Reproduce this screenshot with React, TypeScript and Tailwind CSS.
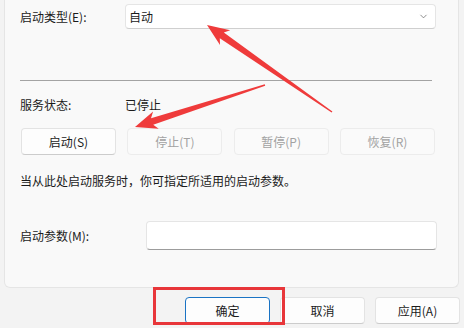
import { ChevronDown } from "lucide-react";

const font = { fontFamily: '"Noto Sans CJK SC", "Noto Sans", sans-serif' };

const serviceButtons = [
  { label: "启动(S)", enabled: true },
  { label: "停止(T)", enabled: false },
  { label: "暂停(P)", enabled: false },
  { label: "恢复(R)", enabled: false },
];

function Arrows() {
  return (
    <svg className="absolute inset-0 pointer-events-none" width="464" height="328" viewBox="0 0 464 328">
      {/* arrow to the startup type box */}
      <polygon
        fill="#ef3b3b"
        points="207,25 230.2,30.2 223.8,32.4 332.4,111.4 331.6,112.6 219.8,38.2 220,45"
      />
      {/* arrow to the start button */}
      <polygon
        fill="#ef3b3b"
        points="135,127 153.1,111.6 151,118.2 264.8,84.3 265.2,85.7 153.2,124.8 158.7,128.8"
      />
    </svg>
  );
}

export default function App() {
  return (
    <div className="relative w-[464px] h-[328px] bg-[#f3f3f3] overflow-hidden text-[12px] text-[#1b1b1b]" style={font}>
      {/* Panel */}
      <div className="ml-[4px] w-[455px] h-[288px] bg-[#f9f9f9] border-x border-b border-[#e5e5e5] rounded-b-[6px] pl-[15px] flex flex-col">
        {/* Startup type */}
        <div className="flex items-center mt-[4px] h-[25px]">
          <span className="w-[105px] leading-4">启动类型(E):</span>
          <div className="w-[311px] h-[25px] bg-white border border-[#e5e5e5] border-b-[#cfcfcf] rounded-[4px] flex items-center justify-between pl-[3px] pr-[6px]">
            <span className="leading-4">自动</span>
            <ChevronDown className="w-[11px] h-[11px] text-[#5c5c5c]" strokeWidth={1.5} />
          </div>
        </div>

        <div className="mt-[51px] w-[412px] h-px bg-[#a3a3a3]" />

        {/* Service status */}
        <div className="flex items-center mt-[16px] h-4">
          <span className="w-[105px] leading-4">服务状态:</span>
          <span className="leading-4">已停止</span>
        </div>

        <div className="mt-[15px] ml-px w-[414px] flex justify-between">
          {serviceButtons.map((b) => (
            <div
              key={b.label}
              className={
                b.enabled
                  ? "w-[95px] h-[27px] flex items-center justify-center rounded-[4px] bg-[#fdfdfd] border border-[#e3e3e3] border-b-[#cccccc] text-[#1b1b1b]"
                  : "w-[95px] h-[27px] flex items-center justify-center rounded-[4px] bg-[#fafafa] border border-[#ececec] text-[#a2a2a2]"
              }
            >
              {b.label}
            </div>
          ))}
        </div>

        <p className="mt-[18px] leading-4">当从此处启动服务时，你可指定所适用的启动参数。</p>

        {/* Start parameters */}
        <div className="flex items-center mt-[32px] h-[29px]">
          <span className="w-[126px] leading-4">启动参数(M):</span>
          <div className="w-[291px] h-[29px] bg-white border border-[#e5e5e5] border-b-[#9c9c9c] rounded-[4px]" />
        </div>
      </div>

      {/* Dialog buttons */}
      <div className="mt-[9px] ml-[185px] flex gap-[10px]">
        <div className="w-[85px] h-[27px] flex items-center justify-center rounded-[4px] bg-[#fdfdfd] border border-[#1a73c4]">确定</div>
        <div className="w-[85px] h-[27px] flex items-center justify-center rounded-[4px] bg-[#fdfdfd] border border-[#e3e3e3] border-b-[#cccccc]">取消</div>
        <div className="w-[85px] h-[27px] flex items-center justify-center rounded-[4px] bg-[#fdfdfd] border border-[#e3e3e3] border-b-[#cccccc]">应用(A)</div>
      </div>

      {/* Annotations */}
      <div className="absolute left-[153px] top-[287px] w-[132px] h-[38px] border-[3px] border-[#e8363a]" />
      <Arrows />
    </div>
  );
}
